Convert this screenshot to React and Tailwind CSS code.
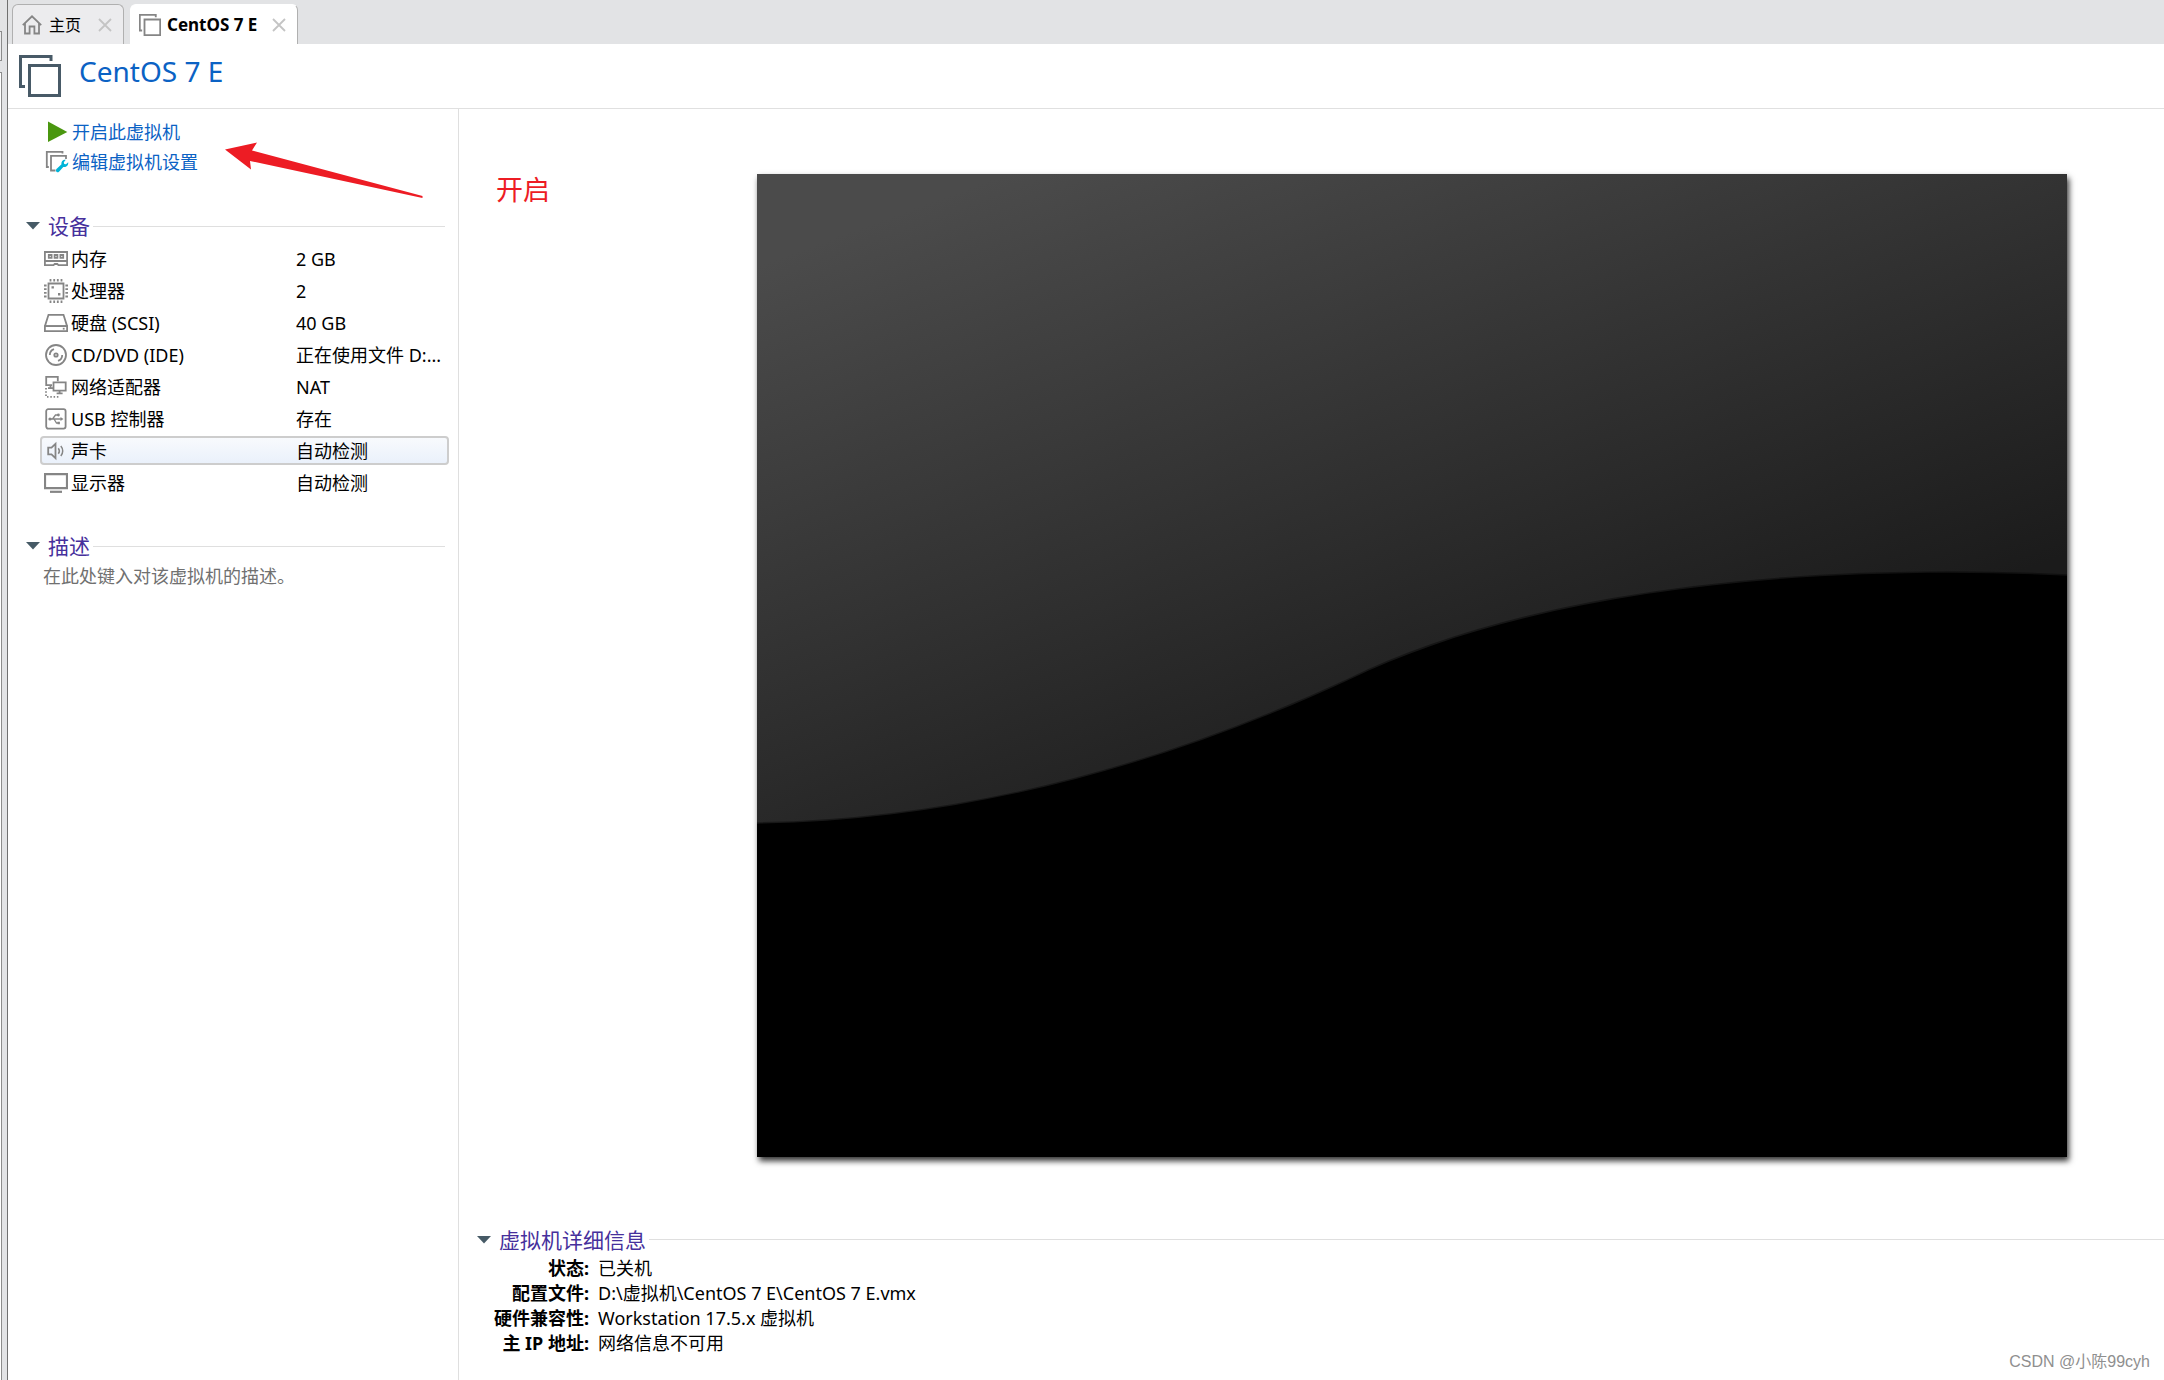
import React from "react";

const GRAY = "#858585";

function Glyph({ children }) {
  return (
    <svg className="size-6 shrink-0" viewBox="0 0 24 24" fill="none" stroke={GRAY} strokeWidth="1.8" aria-hidden="true">
      {children}
    </svg>
  );
}

function MemoryIcon() {
  return (
    <Glyph>
      <path d="M.9 5h22.200v9H.9z" />
      <path d="M.9 13.500v4.600h8.600l1.200-1.100h2.600l1.200 1.100h8.600v-4.600" />
      <path d="M4.800 8h2.800v2.800H4.800zM10.600 8h2.800v2.800h-2.800zM16.400 8h2.800v2.800h-2.800z" />
    </Glyph>
  );
}

function CpuIcon() {
  return (
    <Glyph>
      <path d="M4.500 4.500h15v15h-15z" />
      <path d="M6.500 0v2.600M10.200 0v2.600M13.800 0v2.600M17.500 0v2.600M6.500 21.400V24M10.200 21.400V24M13.800 21.400V24M17.500 21.400V24M0 6.500h2.600M0 10.200h2.600M0 13.800h2.600M0 17.500h2.600M21.400 6.500H24M21.400 10.200H24M21.400 13.800H24M21.400 17.500H24" />
      <path d="M7.500 7.200h2.400v2.400H7.500zM14 14h2.400v2.400H14z" fill={GRAY} stroke="none" />
    </Glyph>
  );
}

function DiskIcon() {
  return (
    <Glyph>
      <path d="M4.500 3.800h15l3.600 11.400H.9z" />
      <path d="M.9 15.200h22.200v5H.9z" />
      <path d="M18.800 16.800h1.800v1.800h-1.800z" fill={GRAY} stroke="none" />
    </Glyph>
  );
}

function DiscIcon() {
  return (
    <Glyph>
      <circle cx="12" cy="12" r="10" />
      <circle cx="12" cy="12" r="1.700" />
      <path d="M5.800 12A6.200 6.200 0 0 1 10 6.100M18.200 12a6.200 6.200 0 0 1-4.200 5.900" />
    </Glyph>
  );
}

function NetworkIcon() {
  return (
    <Glyph>
      <path d="M8 10.200H2.200V1.900h11.600v4.300" />
      <path d="M6.500 10.200v3M4 13.200h5.500" />
      <path d="M9.500 7.400h12.200v8.200H9.500z" />
      <path d="M15.600 15.600v2.800M12.600 18.400h6" />
      <path d="M2 13v9M3 21.800h12" strokeDasharray="1.5 1.8" />
    </Glyph>
  );
}

function UsbIcon() {
  return (
    <Glyph>
      <rect x="2.200" y="2.200" width="19.400" height="19.400" rx="2" />
      <path d="M6 12h11M8.500 12l3-4h2.500M10 12l2.500 4h2" strokeWidth="1.300" />
      <circle cx="6" cy="12" r="1.600" fill={GRAY} stroke="none" />
      <circle cx="14.400" cy="8" r="1.400" fill={GRAY} stroke="none" />
      <path d="M16.500 10v4l3-2zM13.500 14.800h2.400v2.400h-2.400z" fill={GRAY} stroke="none" />
    </Glyph>
  );
}

function SoundIcon() {
  return (
    <Glyph>
      <path d="M4.200 8.600h3.300l4-3.800v14.400l-4-3.800H4.200z" />
      <path d="M14.300 9.200a4.500 4.500 0 0 1 0 5.600M16.800 7a7.500 7.500 0 0 1 0 10" strokeWidth="1.500" />
    </Glyph>
  );
}

function DisplayIcon() {
  return (
    <Glyph>
      <path d="M1 3.200h22v14H1z" strokeWidth="2.200" />
      <path d="M6 20.800h12" strokeWidth="2.200" />
    </Glyph>
  );
}

function HomeIcon() {
  return (
    <svg className="size-5 shrink-0" viewBox="0 0 20 20" fill="none" stroke={GRAY} strokeWidth="1.800" aria-hidden="true">
      <path d="M.8 10.200 10 1.300l9.200 8.900M3 8.500v10h4.600v-7h4.800v7H17v-10" />
    </svg>
  );
}

function MachineIcon({ className, color, width }) {
  return (
    <svg className={className} viewBox="0 0 42 42" fill="none" stroke={color} strokeWidth={width} aria-hidden="true">
      <path d="M10.500 10.500h30v30h-30z" />
      <path d="M32 6V1.500H1.500v30H6" />
    </svg>
  );
}

function EditMachineIcon() {
  return (
    <Glyph>
      <path d="M17.500 3.500V1.800H1.800V17h2" />
      <path d="M21 9V5.800H6V20.500h4.500" />
      <path d="M12 18.500l4.500-4.200c-.5-2.900 1.700-5 4.300-4.500l-2 2.400.4 1.700 1.800.3 2.200-2c.4 3-2 5.300-4.900 4.700L14 21.800c-2 1.700-4.400-1.300-2-3.300z" fill="#00b4d8" stroke="none" />
    </Glyph>
  );
}

function PlayIcon() {
  return (
    <svg className="size-6 shrink-0" viewBox="0 0 24 24" aria-hidden="true">
      <path d="M3 1.500 22.300 12 3 22z" fill="#4a970f" />
    </svg>
  );
}

function CloseButton({ label }) {
  return (
    <button type="button" aria-label={label} className="flex size-4 items-center justify-center">
      <svg className="size-3.5" viewBox="0 0 14 14" fill="none" stroke="#c4c4c4" strokeWidth="1.800" aria-hidden="true">
        <path d="M1 1l12 12M13 1 1 13" />
      </svg>
    </button>
  );
}

function SectionHeading({ children }) {
  return (
    <h2 className="flex h-8 items-center">
      <button type="button" className="flex items-center gap-2 text-[21px] leading-8 text-[#46309c]">
        <svg className="h-2 w-3.5" viewBox="0 0 14 8" aria-hidden="true">
          <path d="M0 0h14L7 7.500z" fill="#465a66" />
        </svg>
        {children}
      </button>
      <span className="ml-[3px] h-px flex-1 bg-[#dfdfdf]" />
    </h2>
  );
}

const devices = [
  { Icon: MemoryIcon, name: "内存", value: "2 GB" },
  { Icon: CpuIcon, name: "处理器", value: "2" },
  { Icon: DiskIcon, name: "硬盘 (SCSI)", value: "40 GB" },
  { Icon: DiscIcon, name: "CD/DVD (IDE)", value: "正在使用文件 D:..." },
  { Icon: NetworkIcon, name: "网络适配器", value: "NAT" },
  { Icon: UsbIcon, name: "USB 控制器", value: "存在" },
  { Icon: SoundIcon, name: "声卡", value: "自动检测", selected: true },
  { Icon: DisplayIcon, name: "显示器", value: "自动检测" },
];

const details = [
  ["状态:", "已关机"],
  ["配置文件:", "D:\\虚拟机\\CentOS 7 E\\CentOS 7 E.vmx"],
  ["硬件兼容性:", "Workstation 17.5.x 虚拟机"],
  ["主 IP 地址:", "网络信息不可用"],
];

function DeviceRow({ Icon, name, value, selected }) {
  return (
    <li className="flex h-8 items-center">
      <button
        type="button"
        className={
          selected
            ? "grid h-[29px] w-full grid-cols-[252px_1fr] items-center rounded border-2 border-[#cdcdcd] bg-linear-to-b from-[#f8fafd] to-[#eaf1fb] px-0.5 text-left"
            : "grid h-[29px] w-full grid-cols-[252px_1fr] items-center border-2 border-transparent px-0.5 text-left"
        }
      >
        <span className="flex items-center gap-[3px]">
          <Icon />
          {name}
        </span>
        <span className="whitespace-nowrap">{value}</span>
      </button>
    </li>
  );
}

function TabBar() {
  return (
    <nav className="flex h-11 items-end gap-1.5 bg-[#e2e3e5] pl-1" aria-label="标签页">
      <div className="flex h-10 w-28 items-center justify-between rounded-t-md border border-b-0 border-[#b0b0b0] bg-[#ececee] pr-2.5 pl-[9px]">
        <button type="button" className="flex items-center gap-[7px] text-[16px]">
          <HomeIcon />
          主页
        </button>
        <CloseButton label="关闭主页" />
      </div>
      <div className="flex h-10 w-[168px] items-center justify-between rounded-t-md border border-b-0 border-t-white border-r-[#b0b0b0] border-l-white bg-white pr-2.5 pl-2">
        <button type="button" className="flex items-center gap-1.5 text-[17px] font-bold">
          <MachineIcon className="size-[22px]" color={GRAY} width="3.500" />
          CentOS 7 E
        </button>
        <CloseButton label="关闭 CentOS 7 E" />
      </div>
    </nav>
  );
}

function Sidebar() {
  return (
    <aside className="relative w-[451px] shrink-0 border-r border-[#dfdfdf]">
      <ul className="pt-2 pl-[37px] text-[18px] text-[#0b62c4]">
        <li>
          <a href="#power-on" className="flex h-[30px] items-center gap-[3px]">
            <PlayIcon />
            开启此虚拟机
          </a>
        </li>
        <li>
          <a href="#settings" className="flex h-[30px] items-center gap-[3px]">
            <EditMachineIcon />
            编辑虚拟机设置
          </a>
        </li>
      </ul>

      <section className="mt-[33px] pr-[13px] pl-[18px]">
        <SectionHeading>设备</SectionHeading>
        <ul className="-mr-1 pl-[14px] text-[18px]">
          {devices.map((device) => (
            <DeviceRow key={device.name} {...device} />
          ))}
        </ul>
      </section>

      <section className="mt-8 pr-[13px] pl-[18px]">
        <SectionHeading>描述</SectionHeading>
        <textarea
          aria-label="描述"
          rows={2}
          placeholder="在此处键入对该虚拟机的描述。"
          className="block w-full resize-none bg-transparent pl-[17px] text-[18px] leading-7 outline-none placeholder:text-[#707070]"
        />
      </section>

      <svg className="absolute top-[33px] left-[217px] h-[57px] w-[198px]" viewBox="0 0 198 57" aria-hidden="true">
        <path d="M0 7.500 32 .5l-5 8L197.500 54v2L25 19l1 8.500z" fill="#ed1c24" />
      </svg>
    </aside>
  );
}

function ScreenPreview() {
  return (
    <svg className="block aspect-4/3 w-full bg-black shadow-[2px_4px_6px_rgba(0,0,0,0.8)]" viewBox="0 0 1310 983" preserveAspectRatio="none" role="img" aria-label="虚拟机屏幕">
      <defs>
        <linearGradient id="glass" gradientUnits="userSpaceOnUse" x1="30" y1="81" x2="281" y2="761">
          <stop offset="0" stopColor="#4b4b4b" />
          <stop offset="1" stopColor="#1b1b1b" />
        </linearGradient>
      </defs>
      <path d="M0 0H1310V402Q1252 399 1193 399C950 399 740 434 592 506C400 595 200 647 0 650z" fill="url(#glass)" />
      <path d="M1310 402Q1252 399 1193 399C950 399 740 434 592 506C400 595 200 647 0 650" fill="none" stroke="#000" strokeOpacity="0.4" strokeWidth="3" />
    </svg>
  );
}

export default function App() {
  return (
    <div className="relative flex min-h-screen bg-white font-['Noto_Sans','Noto_Sans_CJK_SC',sans-serif] text-black">
      <div className="flex w-2 shrink-0 flex-col border-r border-[#707070] bg-[#e2e3e5]">
        <span className="mt-[31px] h-[30px] w-0.5 border-y border-r border-[#8c8c8c] bg-[#ececee]" />
        <span className="mt-[11px] w-0.5 flex-1 border-t border-r border-[#8c8c8c] bg-white" />
      </div>

      <div className="flex min-w-0 flex-1 flex-col">
        <TabBar />
        <header className="flex h-[65px] items-start gap-[18px] border-b border-[#e0e0e0] pt-[11px] pl-[11px]">
          <MachineIcon className="size-[42px]" color="#485a67" width="3" />
          <h1 className="text-[28px] leading-8 text-[#0b62c4]">CentOS 7 E</h1>
        </header>

        <div className="flex flex-1">
          <Sidebar />
          <main className="relative min-w-0 flex-1">
            <div className="pt-[65px] pr-[97px] pl-[298px]">
              <ScreenPreview />
            </div>
            <section className="mt-[67px] pl-[18px]">
              <SectionHeading>虚拟机详细信息</SectionHeading>
              <dl className="grid grid-cols-[112px_1fr] gap-x-[9px] text-[18px] leading-[25px]">
                {details.map(([label, value]) => (
                  <React.Fragment key={label}>
                    <dt className="text-right font-bold whitespace-nowrap">{label}</dt>
                    <dd>{value}</dd>
                  </React.Fragment>
                ))}
              </dl>
            </section>
            <p className="absolute top-[61px] left-[37px] text-[27px] leading-10 text-[#ed1c24]">开启</p>
          </main>
        </div>
      </div>

      <p className="absolute right-3.5 bottom-1.5 font-['Liberation_Sans','Noto_Sans_CJK_SC',sans-serif] text-[16px] leading-6 text-[#8f8f8f]">CSDN @小陈99cyh</p>
    </div>
  );
}
